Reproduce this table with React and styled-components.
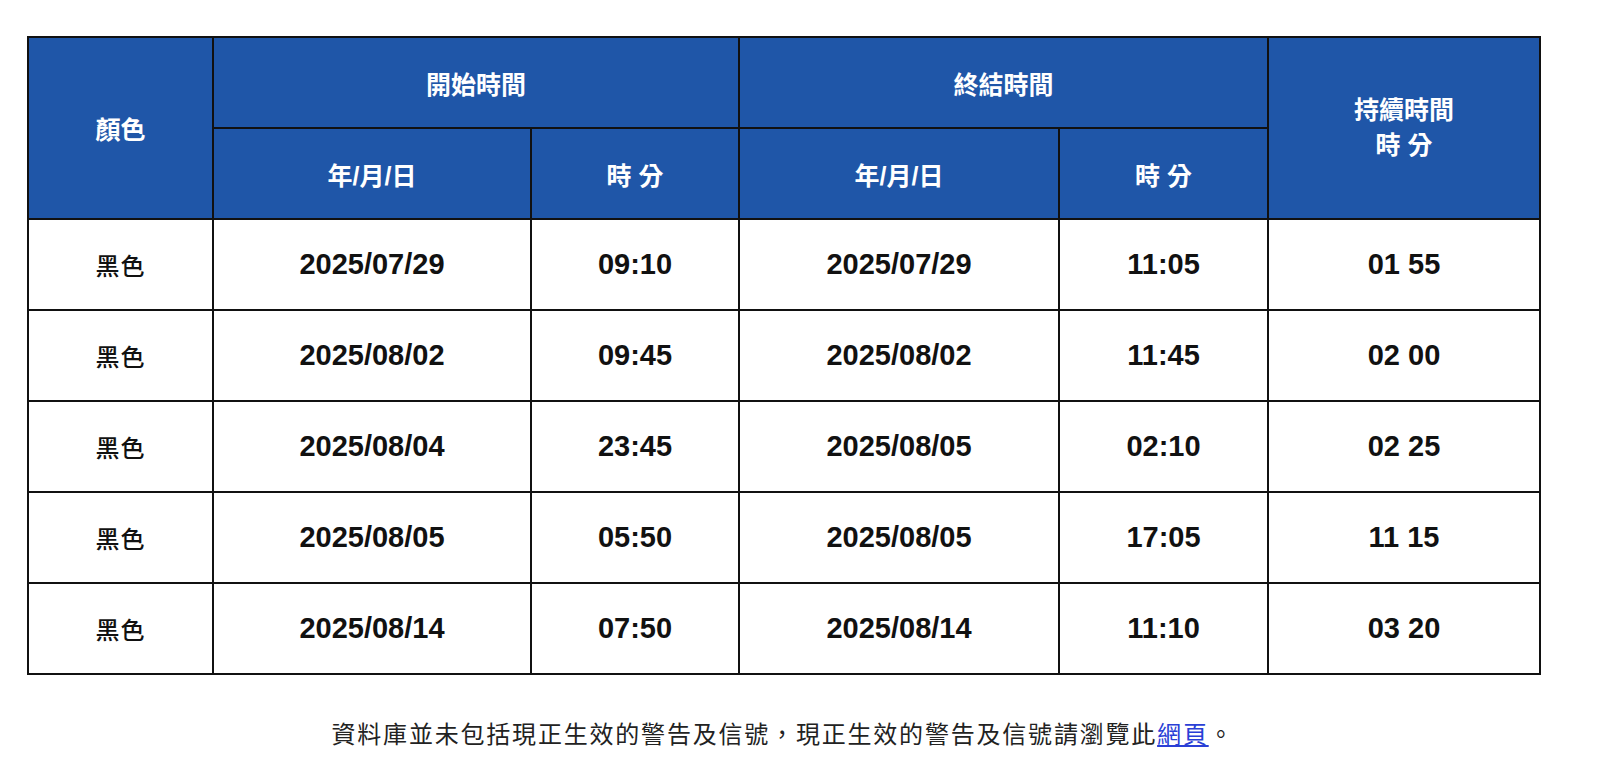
import React from "react";
import styled, { createGlobalStyle } from "styled-components";

const GlobalStyle = createGlobalStyle`
  body {
    margin: 0;
    background: #ffffff;
    font-family: "Liberation Sans", Arial, "Noto Sans CJK TC", sans-serif;
  }
`;

const columns = [185, 318, 208, 320, 209, 272];
const tableWidth = columns.reduce((a, b) => a + b, 0);

const rows = [
  { color: "黑色", startDate: "2025/07/29", startTime: "09:10", endDate: "2025/07/29", endTime: "11:05", duration: "01 55" },
  { color: "黑色", startDate: "2025/08/02", startTime: "09:45", endDate: "2025/08/02", endTime: "11:45", duration: "02 00" },
  { color: "黑色", startDate: "2025/08/04", startTime: "23:45", endDate: "2025/08/05", endTime: "02:10", duration: "02 25" },
  { color: "黑色", startDate: "2025/08/05", startTime: "05:50", endDate: "2025/08/05", endTime: "17:05", duration: "11 15" },
  { color: "黑色", startDate: "2025/08/14", startTime: "07:50", endDate: "2025/08/14", endTime: "11:10", duration: "03 20" },
];

const App = () => {
  return (
    <React.Fragment>
      <GlobalStyle />
      <Page $w={tableWidth}>
        <Table $w={tableWidth}>
          <colgroup>
            {columns.map((w, i) => (
              <Col key={i} $w={w} />
            ))}
          </colgroup>
          <thead>
            <tr>
              <HeadCell rowSpan={2}>顏色</HeadCell>
              <HeadCell colSpan={2}>開始時間</HeadCell>
              <HeadCell colSpan={2}>終結時間</HeadCell>
              <HeadCell rowSpan={2}>
                <HeadLine>持續時間</HeadLine>
                <HeadLine>時 分</HeadLine>
              </HeadCell>
            </tr>
            <tr>
              <HeadCell>年/月/日</HeadCell>
              <HeadCell>時 分</HeadCell>
              <HeadCell>年/月/日</HeadCell>
              <HeadCell>時 分</HeadCell>
            </tr>
          </thead>
          <tbody>
            {rows.map((r, i) => (
              <tr key={i}>
                <ColorCell>{r.color}</ColorCell>
                <Cell>{r.startDate}</Cell>
                <Cell>{r.startTime}</Cell>
                <Cell>{r.endDate}</Cell>
                <Cell>{r.endTime}</Cell>
                <Cell>{r.duration}</Cell>
              </tr>
            ))}
          </tbody>
        </Table>
        <Note>
          資料庫並未包括現正生效的警告及信號，現正生效的警告及信號請瀏覽此
          <NoteLink href="#">網頁</NoteLink>。
        </Note>
      </Page>
    </React.Fragment>
  );
};

const Page = styled.div`
  width: ${(props) => props.$w}px;
  padding: 36px 0 0 27px;
`;

const Table = styled.table`
  border-collapse: collapse;
  table-layout: fixed;
  width: ${(props) => props.$w}px;
  border: 2px solid #111;
`;

const Col = styled.col`
  width: ${(props) => props.$w}px;
`;

const HeadCell = styled.th`
  background: #1f56a8;
  color: #ffffff;
  height: 89px;
  padding: 0;
  border: 2px solid #111;
  text-align: center;
  vertical-align: middle;
  font-family: "Liberation Sans", "Noto Sans CJK TC", sans-serif;
  font-weight: 700;
  font-size: 25px;
`;

const HeadLine = styled.div`
  line-height: 35px;
`;

const Cell = styled.td`
  height: 89px;
  padding: 0;
  border: 2px solid #111;
  text-align: center;
  vertical-align: middle;
  color: #111;
  font-family: "Liberation Sans", Arial, sans-serif;
  font-weight: 700;
  font-size: 29px;
`;

const ColorCell = styled(Cell)`
  font-family: "Noto Sans CJK TC", sans-serif;
  font-weight: 500;
  font-size: 24px;
  letter-spacing: 1px;
`;

const Note = styled.p`
  margin: 40px 0 0;
  text-align: center;
  color: #222;
  font-family: "Noto Sans CJK TC", sans-serif;
  font-size: 24px;
  letter-spacing: 1.8px;
`;

const NoteLink = styled.a`
  color: #2a3fd6;
  text-decoration: underline;
`;

export default App;
